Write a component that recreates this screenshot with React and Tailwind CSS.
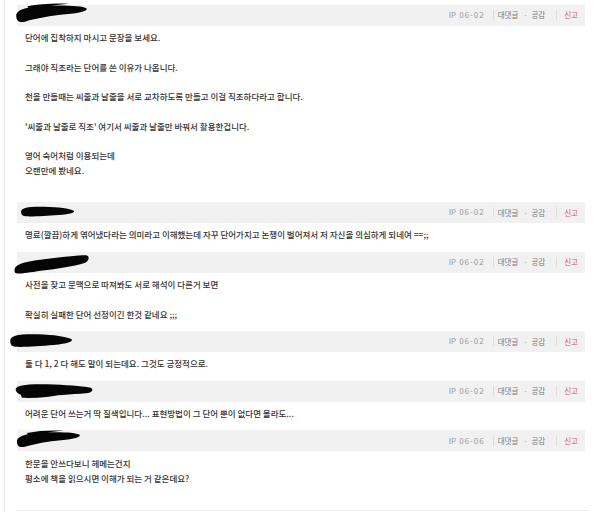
import React from "react";

const FONT = { fontFamily: '"Noto Sans CJK KR", "Noto Sans", sans-serif' };

// Brush-stroke marks that black out the author names.
const STROKES = {
  swoosh:
    "M3 19 C3 9 20 5 45 4 C70 3 92 4 98 8 C100 12 90 15 70 17 C50 19 30 23 15 28 C6 30 3 26 3 19 Z M18 5 C34 1 56 0 74 1 C56 3 38 5 20 8 Z",
  cigar:
    "M2 15 C2 5 20 3 45 4 C70 5 90 8 98 13 C100 17 92 21 70 23 C48 25 22 27 10 26 C3 25 2 21 2 15 Z",
  slant:
    "M2 24 C2 15 18 11 40 8 C62 5 84 2 95 2 C100 3 99 10 94 13 C80 18 58 22 36 25 C20 28 8 30 4 29 C2 28 2 26 2 24 Z",
  blob:
    "M2 13 C2 5 18 3 42 4 C64 5 84 7 96 10 C100 13 98 19 90 20 C72 22 50 24 30 25 C14 27 2 22 2 13 Z M8 21 C26 18 50 18 72 19 C50 26 28 29 10 28 Z",
};

function Redaction({ shape, left, top, width, height }) {
  return (
    <svg
      className="absolute"
      style={{ left, top, width, height }}
      viewBox="0 0 100 30"
      preserveAspectRatio="none"
    >
      <path d={STROKES[shape]} fill="#050505" />
    </svg>
  );
}

function CommentHeader({ date, mark }) {
  return (
    <div className="relative flex h-[21px] items-center bg-[#f1f1f1]">
      <Redaction {...mark} />
      <div className="ml-auto flex items-center pr-[7px] text-[7.5px] text-[#7a7a7a]">
        <span className="text-[8px] text-[#999]">IP</span>
        <span className="ml-[3px] text-[8px] tracking-[1px] text-[#999]">{date}</span>
        <span className="ml-[8px] mr-[4px] h-[10px] w-px bg-[#dedede]" />
        <span>대댓글</span>
        <span className="ml-[5px] mr-[5px] inline-block w-[3px] text-center text-[#999]">·</span>
        <span>공감</span>
        <span className="ml-[11px] mr-[7px] h-[10px] w-px bg-[#dedede]" />
        <span className="text-[#d25f5f]">신고</span>
      </div>
    </div>
  );
}

function Comment({ date, mark, lines }) {
  return (
    <div>
      <CommentHeader date={date} mark={mark} />
      <div className="pb-[9.5px] pl-[8px] pt-[4.5px] text-[8.5px] font-medium leading-[14.75px] text-[#333]">
        {lines.map((line, i) => (
          <div key={i} className="h-[14.75px] whitespace-nowrap">
            {line}
          </div>
        ))}
      </div>
    </div>
  );
}

const COMMENTS = [
  {
    date: "06-02",
    mark: { shape: "swoosh", left: -3, top: -2, width: 74, height: 20 },
    lines: [
      "단어에 집착하지 마시고 문장을 보세요.",
      "",
      "그래야 직조라는 단어를 쓴 이유가 나옵니다.",
      "",
      "천을 만들때는 씨줄과 날줄을 서로 교차하도록 만들고 이걸 직조하다라고 합니다.",
      "",
      "'씨줄과 날줄로 직조' 여기서 씨줄과 날줄만 바꿔서 활용한겁니다.",
      "",
      "영어 숙어처럼 이용되는데",
      "오랜만에 봤네요.",
      "",
    ],
  },
  {
    date: "06-02",
    mark: { shape: "cigar", left: 3, top: 3, width: 55, height: 13 },
    lines: [
      "명료(깔끔)하게 엮어냈다라는 의미라고 이해했는데 자꾸 단어가지고 논쟁이 벌어져서 저 자신을 의심하게 되네여 ==;;",
    ],
  },
  {
    date: "06-02",
    mark: { shape: "slant", left: -4, top: 2, width: 77, height: 20 },
    lines: [
      "사전을 찾고 문맥으로 따져봐도 서로 해석이 다른거 보면",
      "",
      "확실히 실패한 단어 선정이긴 한것 같네요 ;;;",
    ],
  },
  {
    date: "06-02",
    mark: { shape: "cigar", left: -8, top: 1, width: 64, height: 17 },
    lines: ["둘 다 1, 2 다 해도 말이 되는데요. 그것도 긍정적으로."],
  },
  {
    date: "06-02",
    mark: { shape: "blob", left: -3, top: 1, width: 80, height: 17 },
    lines: ["어려운 단어 쓰는거 딱 질색입니다... 표현방법이 그 단어 뿐이 없다면 몰라도..."],
  },
  {
    date: "06-06",
    mark: { shape: "swoosh", left: -2, top: 0, width: 66, height: 18 },
    lines: ["한문을 안쓰다보니 헤메는건지", "평소에 책을 읽으시면 이해가 되는 거 같은데요?", ""],
  },
];

export default function App() {
  return (
    <div className="min-h-[512px] w-[600px] overflow-hidden bg-white" style={FONT}>
      <div className="ml-[4px] min-h-[512px] border-l border-[#e6e6e6] pl-[12px] pr-[15px] pt-[4.5px]">
        {COMMENTS.map((c, i) => (
          <Comment key={i} {...c} />
        ))}
        <div className="mr-[-3px] h-px bg-[#ebebeb]" />
      </div>
    </div>
  );
}
